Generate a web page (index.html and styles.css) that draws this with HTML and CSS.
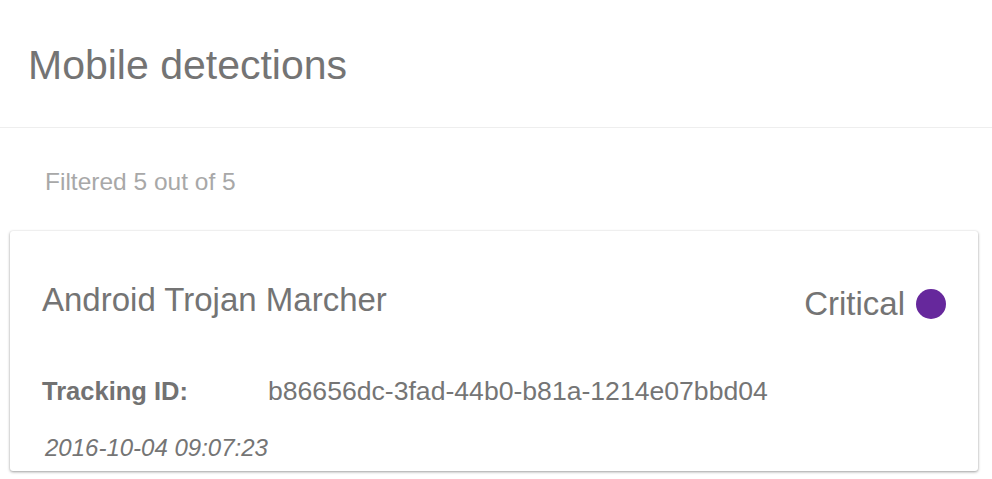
FILE: index.html
```html
<!DOCTYPE html>
<html lang="en">
<head>
<meta charset="utf-8">
<title>Mobile detections</title>
<link rel="stylesheet" href="styles.css">
</head>
<body>
  <header class="page-header">
    <h1 class="page-title">Mobile detections</h1>
  </header>
  <main class="content">
    <p class="filter-info">Filtered 5 out of 5</p>
    <article class="card">
      <div class="card-head">
        <h2 class="card-title">Android Trojan Marcher</h2>
        <div class="severity">
          <span class="severity-label">Critical</span>
          <span class="severity-dot"></span>
        </div>
      </div>
      <div class="card-row">
        <span class="row-label">Tracking ID:</span>
        <span class="row-value">b86656dc-3fad-44b0-b81a-1214e07bbd04</span>
      </div>
      <div class="card-date">2016-10-04 09:07:23</div>
    </article>
  </main>
</body>
</html>
```
FILE: styles.css
```css
* { box-sizing: border-box; }

html, body {
  margin: 0;
  padding: 0;
  background: #ffffff;
}

body {
  font-family: "Liberation Sans", Arial, Helvetica, sans-serif;
  color: #757575;
}

.page-header {
  padding: 41px 0 38px 28px;
  border-bottom: 1px solid #eeeeee;
}

.page-title {
  margin: 0;
  font-size: 41px;
  line-height: 48px;
  font-weight: normal;
  color: #747474;
}

.content {
  padding: 39px 14px 8px 10px;
}

.filter-info {
  margin: 0 0 34px 35px;
  font-size: 24.5px;
  line-height: 30px;
  color: #a8a8a8;
}

.card {
  background: #ffffff;
  border-radius: 3px;
  box-shadow: 0 1px 3px rgba(0, 0, 0, 0.38), 0 0 2px rgba(0, 0, 0, 0.06);
  padding: 49px 32px 8px 32px;
  height: 240px;
}

.card-head {
  display: flex;
  justify-content: space-between;
  align-items: flex-start;
}

.card-title {
  margin: 0;
  font-size: 33px;
  line-height: 40px;
  font-weight: normal;
  color: #747474;
}

.severity {
  display: flex;
  align-items: center;
  gap: 11px;
  margin-top: 4px;
}

.severity-label {
  font-size: 33px;
  line-height: 40px;
  color: #747474;
}

.severity-dot {
  width: 30px;
  height: 30px;
  border-radius: 50%;
  background: #66289c;
}

.card-row {
  display: flex;
  align-items: baseline;
  margin-top: 51px;
  line-height: 32px;
}

.row-label {
  width: 226px;
  flex: none;
  font-weight: bold;
  font-size: 25.5px;
  color: #727272;
}

.row-value {
  font-size: 26.6px;
  color: #757575;
}

.card-date {
  margin: 26px 0 0 3px;
  font-size: 24px;
  line-height: 30px;
  font-style: italic;
  color: #757575;
}
```
